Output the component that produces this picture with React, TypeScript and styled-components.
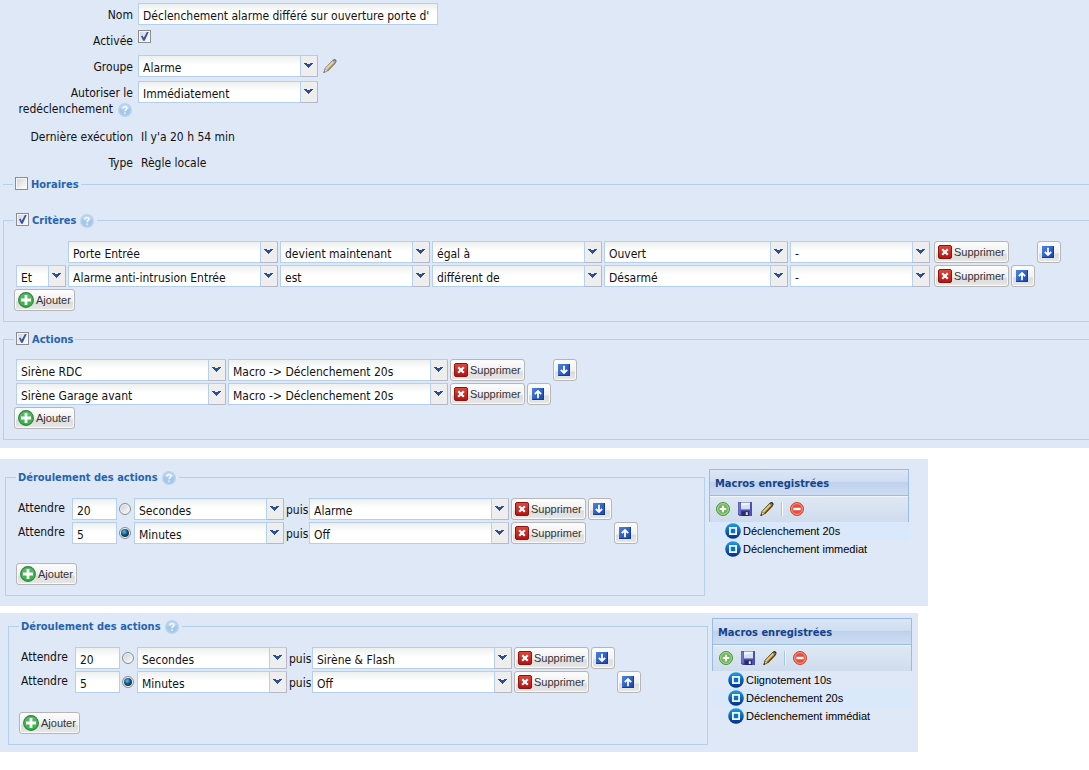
import React, { useId } from 'react';
import styled, { createGlobalStyle, css } from 'styled-components';

const UI_FONT = "Tahoma, 'DejaVu Sans Condensed', 'DejaVu Sans', sans-serif";
const BUTTON_FONT = "'Liberation Sans', Arial, sans-serif";
const LINE = '#b5d0ee';

const GlobalStyle = createGlobalStyle`
  *, *::before, *::after { box-sizing: border-box; }
  body {
    margin: 0;
    background: #fff;
    color: #111;
    font: 12px/16px ${UI_FONT};
  }
  input, select, button { font: inherit; color: inherit; margin: 0; }
`;

const Page = styled.main`
  display: flex;
  flex-direction: column;
  overflow-x: hidden;
`;

const RulePanel = styled.section`
  background: #dfe8f6;
  padding: 3px 0 8px;
  margin-bottom: 11px;
`;

const Settings = styled.div`
  display: flex;
  flex-direction: column;
  gap: 4px;
  margin-bottom: 3px;
`;

const FormRow = styled.div<{ $tall?: boolean }>`
  display: grid;
  grid-template-columns: 133px 1fr;
  column-gap: 5px;
  align-items: start;
  min-height: ${(p) => (p.$tall ? 40 : 22)}px;
`;

const FormLabel = styled.label`
  padding-top: 4px;
  text-align: right;
`;

const FormValue = styled.div`
  display: flex;
  align-items: center;
  gap: 4px;
`;

const TickValue = styled(FormValue)`
  padding-top: 1px;
`;

const PlainValue = styled.output`
  padding: 4px 0 0 3px;
`;

const fieldLook = css`
  height: 22px;
  border: 1px solid ${LINE};
  border-radius: 0;
  background: #fff linear-gradient(#edf0f0, #fff 9px) no-repeat;
  padding: 3px 4px 0;
  line-height: 16px;
  outline: none;
`;

const TextField = styled.input<{ $width: number }>`
  ${fieldLook}
  width: ${(p) => p.$width}px;
`;

const ComboBox = styled.span<{ $width: number }>`
  display: grid;
  grid-template-columns: 1fr 18px;
  flex: none;
  width: ${(p) => p.$width}px;
  height: 22px;
`;

const ComboSelect = styled.select`
  ${fieldLook}
  grid-area: 1 / 1 / 2 / 3;
  appearance: none;
  min-width: 0;
  padding-right: 20px;
`;

const ComboTrigger = styled.span`
  grid-area: 1 / 2;
  display: flex;
  padding: 7px 0 0 3px;
  border: 1px solid #b5b8c8;
  border-left-color: ${LINE};
  border-top-color: #c3cbd8;
  border-radius: 0 2px 0 0;
  background: #eee;
  pointer-events: none;
`;

const Tick = styled.input`
  appearance: none;
  flex: none;
  width: 13px;
  height: 13px;
  border: 1px solid #8a8d90;
  background: linear-gradient(135deg, #cfd3d8, #fff);
  box-shadow: inset 0 0 0 1px #f6f6f6;
  &:checked::before {
    content: '';
    display: block;
    width: 11px;
    height: 11px;
    background: #3d51a0;
    clip-path: polygon(18% 48%, 32% 40%, 43% 62%, 72% 8%, 88% 8%, 52% 88%, 38% 88%);
  }
`;

const Radio = styled.input`
  appearance: none;
  flex: none;
  width: 12px;
  height: 12px;
  margin: 0 1px 0 0;
  border: 1px solid #8a8d90;
  border-radius: 50%;
  background: linear-gradient(135deg, #c9cdd2, #fff);
  box-shadow: inset 0 0 0 1px #f4f4f4;
  &:checked::before {
    content: '';
    display: block;
    width: 8px;
    height: 8px;
    margin: 1px;
    border-radius: 50%;
    background: radial-gradient(circle at 40% 35%, #5cc4ee, #14507c 45%, #0b2444);
  }
`;

const Group = styled.fieldset<{ $roomy?: boolean }>`
  min-width: 0;
  margin: 0 0 9px 3px;
  padding: ${(p) => (p.$roomy ? 13 : 12)}px 10px 10px;
  border: 1px solid ${LINE};
  border-right: 0;
  &:last-child { margin-bottom: 0; }
`;

const CollapsedGroup = styled.fieldset`
  min-width: 0;
  margin: 0 0 20px 3px;
  padding: 0 10px;
  border: 0 solid ${LINE};
  border-top-width: 1px;
`;

const Title = styled.legend`
  height: 16px;
  padding: 0 2px;
  font-size: 11px;
  font-weight: bold;
  color: #2464b0;
`;

const TitleContent = styled.label`
  display: flex;
  align-items: center;
  gap: 3px;
  height: 17px;
  padding-top: 1px;
  white-space: nowrap;
  ${Tick} { align-self: flex-start; }
`;

const Rows = styled.div`
  display: flex;
  flex-direction: column;
  gap: 2px;
  padding-left: 2px;
`;

const Row = styled.div`
  display: flex;
  align-items: center;
  gap: 2px;
  height: 22px;
`;

const Space = styled.span<{ $width: number }>`
  flex: none;
  width: ${(p) => p.$width}px;
`;

const Button = styled.button<{ $width: number; $gap?: number }>`
  display: flex;
  align-items: center;
  gap: 2px;
  flex: none;
  width: ${(p) => p.$width}px;
  height: 22px;
  margin-left: ${(p) => p.$gap ?? 0}px;
  padding: 0 0 0 3px;
  border: 1px solid #b6b6b6;
  border-radius: 3px;
  background: linear-gradient(#fdfdfd, #f0f0f0 55%, #dcdcdc 60%, #e8e8e8);
  box-shadow: inset 0 0 0 1px #fafafa;
  color: #333;
  font: 11px/16px ${BUTTON_FONT};
  white-space: nowrap;
`;

const MoveButton = styled(Button)`
  padding-left: 4px;
`;

const AddLine = styled.div<{ $apart?: boolean }>`
  display: flex;
  padding-top: ${(p) => (p.$apart ? 19 : 2)}px;
`;

const SequencePanel = styled.section<{ $width: number; $inset: number; $top: number; $bottom: number }>`
  display: flex;
  align-items: flex-start;
  gap: 4px;
  width: 100%;
  max-width: ${(p) => p.$width}px;
  margin-bottom: 7px;
  padding: ${(p) => p.$top}px 6px ${(p) => p.$bottom}px ${(p) => p.$inset}px;
  background: #dfe8f6;
`;

const Sequence = styled.fieldset`
  flex: 0 1 700px;
  min-width: 0;
  margin: 0;
  padding: 13px 10px 10px;
  border: 1px solid ${LINE};
`;

const WaitLabel = styled.label`
  width: 52px;
  padding-bottom: 2px;
`;

const Then = styled.span`
  width: 21px;
  padding-top: 2px;
`;

const Macros = styled.aside`
  flex: none;
  width: 200px;
`;

const MacrosTitle = styled.h2`
  margin: 0;
  height: 27px;
  padding: 6px 5px 4px;
  border: 1px solid #99bbe8;
  background: linear-gradient(#dbe6f5, #cfdef2 45%, #bfd2ec 50%, #cddcf2);
  color: #15428b;
  font: bold 11px/16px ${UI_FONT};
`;

const Toolbar = styled.div`
  display: flex;
  align-items: center;
  gap: 6px;
  height: 26px;
  padding: 0 5px;
  border: solid #99bbe8;
  border-width: 0 1px;
  background: linear-gradient(#dfe9f5, #cfdcec);
  box-shadow: inset 0 1px #f0f5fb;
`;

const ToolButton = styled.button`
  display: flex;
  width: 16px;
  height: 16px;
  padding: 0;
  border: 0;
  background: none;
`;

const ToolDivider = styled.span`
  width: 2px;
  height: 14px;
  border-left: 1px solid #98c8ff;
  border-right: 1px solid #fff;
`;

const MacroList = styled.ul`
  margin: 0;
  padding: 0;
  list-style: none;
`;

const Macro = styled.li<{ $selected?: boolean }>`
  display: flex;
  align-items: center;
  gap: 2px;
  height: 18px;
  padding-left: 16px;
  background: ${(p) => (p.$selected ? '#d9e8fb' : 'none')};
  color: #000;
  font: 11px/16px ${BUTTON_FONT};
`;

const IconBox = styled.svg`
  display: block;
  flex: none;
`;

const InlineHelp = styled.span`
  display: inline-block;
  margin-left: 4px;
  vertical-align: -5px;
`;

const ChevronIcon = () => (
  <IconBox width="9" height="6" viewBox="0 0 9 6" shapeRendering="crispEdges" aria-hidden>
    <path d="M0 0h3v1h3v-1h3v1h-1v1h-1v1h-1v1h-1v1h-1v-1h-1v-1h-1v-1h-1v-1h-1z" fill="#2d4f93" />
  </IconBox>
);

const HelpIcon = () => (
  <IconBox width="16" height="16" viewBox="0 0 16 16" aria-hidden>
    <circle cx="8" cy="8" r="7" fill="#b9d3ef" />
    <circle cx="8" cy="8" r="5.6" fill="#a5c7ea" />
    <path d="M3 6a5.3 5.3 0 0 1 10 0q-5 3-10 0z" fill="#bdd7f1" />
    <path d="M6 6.4q0-2 2-2t2 1.7q0 1-1 1.6T8 9.2M8 10.5v1.4" fill="none" stroke="#f4f9ff" strokeWidth="1.5" />
  </IconBox>
);

const PencilIcon = ({ faded }: { faded?: boolean }) => (
  <IconBox width="16" height="16" viewBox="0 0 16 16" opacity={faded ? 0.6 : 1} aria-hidden>
    <path d="M1.5 15l1-4.5L11.2 1.6q1.2-1 2.5 0t.7 2.5L6 13z" fill="#2a2410" />
    <path d="M3.2 10.8l7.6-7.9 2.7 2.2-7.6 7.9z" fill="#b98a2a" />
    <path d="M3.2 10.8l7.6-7.9 1.2 1-7.6 7.9z" fill="#efd07c" />
    <path d="M5.2 12.4l7.6-7.9.9.7-7.6 7.9z" fill="#4a3a14" />
    <path d="M11 2.8l1.2-.9 1.6 1.5-.9 1.4z" fill="#777" />
    <path d="M2.9 11l2.3 1.7-2.6 1.2z" fill="#f0d6ac" />
    <path d="M1.5 15l.5-2 1.3 1.2z" fill="#111" />
  </IconBox>
);

const DeleteIcon = () => {
  const id = useId();
  return (
    <IconBox width="14" height="14" viewBox="0 0 14 14" aria-hidden>
      <linearGradient id={id} x2="0" y2="1">
        <stop stopColor="#e0493c" />
        <stop offset="1" stopColor="#b01212" />
      </linearGradient>
      <rect x=".5" y=".5" width="13" height="13" rx="1.5" fill={`url(#${id})`} stroke="#8e1512" />
      <path d="M4.2 4.2l5.6 5.6M9.8 4.2l-5.6 5.6" stroke="#fff" strokeWidth="2.2" />
    </IconBox>
  );
};

const AddIcon = () => {
  const id = useId();
  return (
    <IconBox width="16" height="16" viewBox="0 0 16 16" aria-hidden>
      <linearGradient id={id} x2="0" y2="1">
        <stop stopColor="#5fb86c" />
        <stop offset="1" stopColor="#2fb53a" />
      </linearGradient>
      <circle cx="8" cy="8" r="7.4" fill={`url(#${id})`} stroke="#2b8440" strokeWidth="1.1" />
      <path d="M8 3v10M3 8h10" stroke="#fff" strokeWidth="2.8" />
    </IconBox>
  );
};

const ArrowIcon = ({ up }: { up?: boolean }) => {
  const id = useId();
  return (
    <IconBox width="12" height="12" viewBox="0 0 12 12" aria-hidden>
      <linearGradient id={id} x2="1" y2="1">
        <stop stopColor="#4c83e4" />
        <stop offset="1" stopColor="#1b47ae" />
      </linearGradient>
      <rect width="12" height="12" fill="#173d92" />
      <rect width="11" height="11" fill={`url(#${id})`} />
      <path
        d={up ? 'M6 10.2V3M2.8 6.2L6 3l3.2 3.2' : 'M6 1.8V9M2.8 5.8L6 9l3.2-3.2'}
        fill="none"
        stroke="#fff"
        strokeWidth="1.8"
      />
    </IconBox>
  );
};

const RoundIcon = ({ kind }: { kind: 'add' | 'remove' }) => {
  const add = kind === 'add';
  return (
    <IconBox width="16" height="16" viewBox="0 0 16 16" aria-hidden>
      <circle cx="8" cy="8" r="6.5" fill={add ? '#71b75b' : '#e4523f'} stroke={add ? '#4b9540' : '#cd4634'} />
      <circle cx="8" cy="8" r="5.4" fill="none" stroke={add ? '#a9d796' : '#f5988a'} />
      <path d={add ? 'M8 4.8v6.4M4.8 8h6.4' : 'M4.4 8h7.2'} stroke="#fff" strokeWidth={add ? 2 : 2.4} />
    </IconBox>
  );
};

const SaveIcon = () => (
  <IconBox width="16" height="16" viewBox="0 0 16 16" aria-hidden>
    <path d="M1 1h14v14H2.5L1 13.5z" fill="#4b4fae" />
    <path d="M1.5 1.5h2v12h-1l-1-1z" fill="#7478cf" />
    <path d="M4 1.5h9v6.7H4z" fill="#f1f5fc" />
    <path d="M4 5l9-2v5.2H4z" fill="#d5e1f3" />
    <path d="M4.5 10.3h7.5V15H4.5z" fill="#282c68" />
    <path d="M8.8 11.2h2V14h-2z" fill="#dfe4f2" />
  </IconBox>
);

const MacroIcon = () => {
  const id = useId();
  return (
    <IconBox width="16" height="16" viewBox="0 0 16 16" aria-hidden>
      <linearGradient id={id} x2="0" y2="1">
        <stop stopColor="#1aa2e2" />
        <stop offset="1" stopColor="#06298a" />
      </linearGradient>
      <circle cx="8" cy="8" r="7.8" fill={`url(#${id})`} />
      <rect x="4.9" y="4.9" width="6.2" height="6.2" fill="#0a70bf" stroke="#fff" strokeWidth="1.7" />
    </IconBox>
  );
};

const Combo = ({ value, width, label, id }: { value: string; width: number; label?: string; id?: string }) => (
  <ComboBox $width={width}>
    <ComboSelect id={id} aria-label={label} defaultValue={value}>
      <option>{value}</option>
    </ComboSelect>
    <ComboTrigger>
      <ChevronIcon />
    </ComboTrigger>
  </ComboBox>
);

const RowButtons = ({ move, offset, gap }: { move: 'up' | 'down'; offset: boolean; gap?: number }) => (
  <>
    <Button type="button" $width={75} $gap={gap}>
      <DeleteIcon />
      Supprimer
    </Button>
    {offset && <Space $width={24} />}
    <MoveButton type="button" $width={24} aria-label={move === 'up' ? 'Monter' : 'Descendre'}>
      <ArrowIcon up={move === 'up'} />
    </MoveButton>
  </>
);

const AddButton = ({ apart }: { apart?: boolean }) => (
  <AddLine $apart={apart}>
    <Button type="button" $width={61}>
      <AddIcon />
      Ajouter
    </Button>
  </AddLine>
);

const CRITERIA = [
  { link: '', cells: ['Porte Entrée', 'devient maintenant', 'égal à', 'Ouvert', '-'] },
  { link: 'Et', cells: ['Alarme anti-intrusion Entrée', 'est', 'différent de', 'Désarmé', '-'] },
];
const CRITERIA_WIDTHS = [210, 150, 170, 184, 140];
const CRITERIA_NAMES = ['Élément', 'Condition', 'Comparaison', 'Valeur', 'Complément'];
const DEVICES = ['Sirène RDC', 'Sirène Garage avant'];

type MacroEditorProps = {
  name: string;
  width: number;
  inset: number;
  top: number;
  bottom: number;
  firstState: string;
  macros: string[];
  selected: string;
};

const MacroEditor = ({ name, width, inset, top, bottom, firstState, macros, selected }: MacroEditorProps) => (
  <SequencePanel $width={width} $inset={inset} $top={top} $bottom={bottom}>
    <Sequence>
      <Title>
        <TitleContent as="span">
          Déroulement des actions <HelpIcon />
        </TitleContent>
      </Title>
      <Rows>
        {[
          { delay: '20', unit: 'Secondes', state: firstState },
          { delay: '5', unit: 'Minutes', state: 'Off' },
        ].map((step, i) => (
          <Row key={step.unit}>
            <WaitLabel htmlFor={`${name}-delay-${i}`}>Attendre</WaitLabel>
            <TextField id={`${name}-delay-${i}`} $width={45} defaultValue={step.delay} />
            <Radio type="radio" name={`${name}-base`} aria-label={step.unit} defaultChecked={i === 1} />
            <Combo label="Unité" value={step.unit} width={150} />
            <Then>puis</Then>
            <Combo label="État" value={step.state} width={200} />
            <RowButtons move={i ? 'up' : 'down'} offset={i === 1} />
          </Row>
        ))}
      </Rows>
      <AddButton apart />
    </Sequence>
    <Macros>
      <MacrosTitle>Macros enregistrées</MacrosTitle>
      <Toolbar>
        <ToolButton type="button" aria-label="Ajouter"><RoundIcon kind="add" /></ToolButton>
        <ToolButton type="button" aria-label="Enregistrer"><SaveIcon /></ToolButton>
        <ToolButton type="button" aria-label="Renommer"><PencilIcon /></ToolButton>
        <ToolDivider />
        <ToolButton type="button" aria-label="Supprimer"><RoundIcon kind="remove" /></ToolButton>
      </Toolbar>
      <MacroList>
        {macros.map((macro) => (
          <Macro key={macro} $selected={macro === selected}>
            <MacroIcon />
            {macro}
          </Macro>
        ))}
      </MacroList>
    </Macros>
  </SequencePanel>
);

export default function App() {
  return (
    <Page>
      <GlobalStyle />
      <RulePanel>
        <Settings>
          <FormRow>
            <FormLabel htmlFor="nom">Nom</FormLabel>
            <FormValue>
              <TextField id="nom" $width={300} defaultValue="Déclenchement alarme différé sur ouverture porte d'" />
            </FormValue>
          </FormRow>
          <FormRow>
            <FormLabel htmlFor="active">Activée</FormLabel>
            <TickValue>
              <Tick id="active" type="checkbox" defaultChecked />
            </TickValue>
          </FormRow>
          <FormRow>
            <FormLabel htmlFor="groupe">Groupe</FormLabel>
            <FormValue>
              <Combo id="groupe" value="Alarme" width={180} />
              <ToolButton type="button" aria-label="Modifier le groupe"><PencilIcon faded /></ToolButton>
            </FormValue>
          </FormRow>
          <FormRow $tall>
            <FormLabel htmlFor="delai">
              Autoriser le redéclenchement
              <InlineHelp><HelpIcon /></InlineHelp>
            </FormLabel>
            <FormValue>
              <Combo id="delai" value="Immédiatement" width={180} />
            </FormValue>
          </FormRow>
          <FormRow>
            <FormLabel htmlFor="execution">Dernière exécution</FormLabel>
            <PlainValue id="execution">Il y'a 20 h 54 min</PlainValue>
          </FormRow>
          <FormRow>
            <FormLabel htmlFor="type">Type</FormLabel>
            <PlainValue id="type">Règle locale</PlainValue>
          </FormRow>
        </Settings>

        <CollapsedGroup>
          <Title>
            <TitleContent>
              <Tick type="checkbox" /> Horaires
            </TitleContent>
          </Title>
        </CollapsedGroup>

        <Group $roomy>
          <Title>
            <TitleContent>
              <Tick type="checkbox" defaultChecked /> Critères <HelpIcon />
            </TitleContent>
          </Title>
          <Rows>
            {CRITERIA.map(({ link, cells }, i) => (
              <Row key={cells[0]}>
                {link ? <Combo label="Opérateur" value={link} width={50} /> : <Space $width={50} />}
                {cells.map((cell, c) => (
                  <Combo key={CRITERIA_NAMES[c]} label={CRITERIA_NAMES[c]} value={cell} width={CRITERIA_WIDTHS[c]} />
                ))}
                <RowButtons move={i ? 'up' : 'down'} offset={i === 0} gap={2} />
              </Row>
            ))}
          </Rows>
          <AddButton />
        </Group>

        <Group>
          <Title>
            <TitleContent>
              <Tick type="checkbox" defaultChecked /> Actions
            </TitleContent>
          </Title>
          <Rows>
            {DEVICES.map((device, i) => (
              <Row key={device}>
                <Combo label="Équipement" value={device} width={210} />
                <Combo label="Action" value="Macro -> Déclenchement 20s" width={220} />
                <RowButtons move={i ? 'up' : 'down'} offset={i === 0} />
              </Row>
            ))}
          </Rows>
          <AddButton />
        </Group>
      </RulePanel>

      <MacroEditor
        name="alarme"
        width={928}
        inset={5}
        top={10}
        bottom={10}
        firstState="Alarme"
        macros={['Déclenchement 20s', 'Déclenchement immediat']}
        selected="Déclenchement 20s"
      />
      <MacroEditor
        name="sirene"
        width={918}
        inset={8}
        top={5}
        bottom={7}
        firstState="Sirène & Flash"
        macros={['Clignotement 10s', 'Déclenchement 20s', 'Déclenchement immédiat']}
        selected="Déclenchement 20s"
      />
    </Page>
  );
}
